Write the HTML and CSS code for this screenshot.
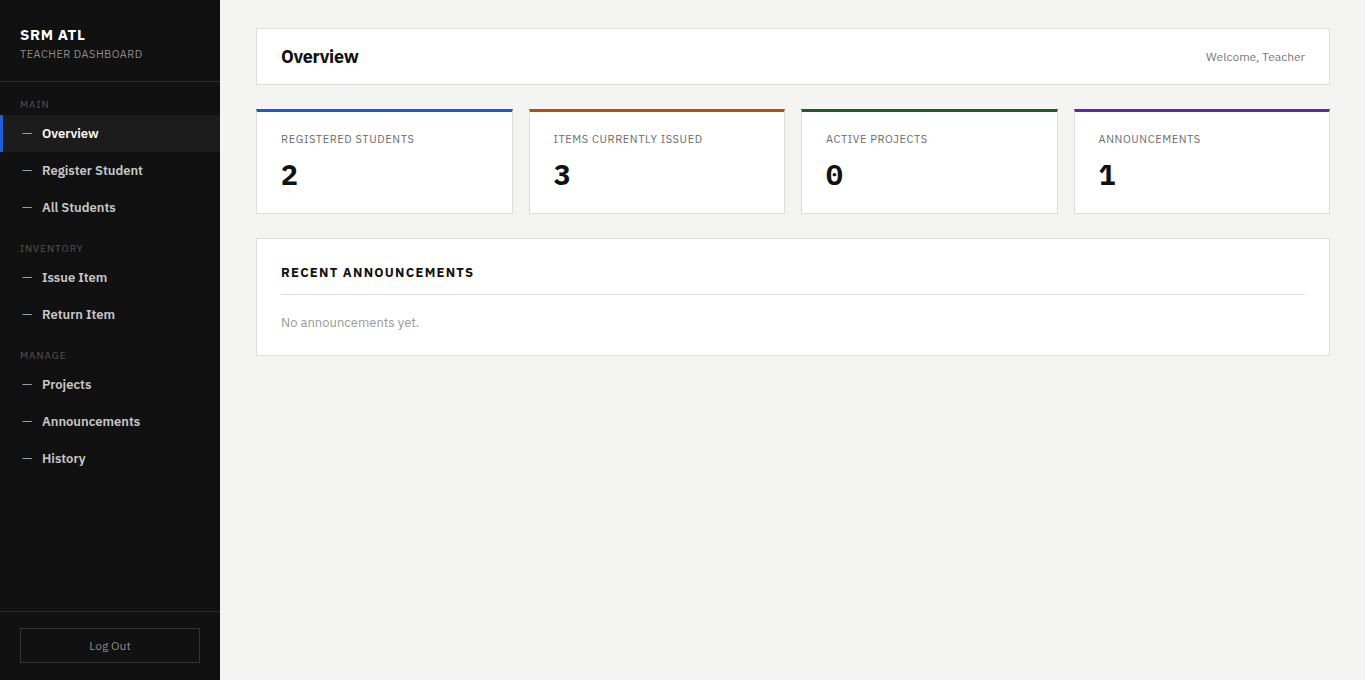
FILE: index.html
```html
<!DOCTYPE html>
<html lang="en">
<head>
<meta charset="utf-8">
<title>SRM ATL — Teacher Dashboard</title>
<link rel="stylesheet" href="styles.css">
</head>
<body>
<div class="app">
  <aside class="sidebar">
    <div class="brand">
      <div class="brand-name">SRM ATL</div>
      <div class="brand-sub">TEACHER DASHBOARD</div>
    </div>
    <nav class="nav">
      <div class="nav-section">
        <div class="nav-label">MAIN</div>
        <a class="nav-item active"><span class="dash">—</span>Overview</a>
        <a class="nav-item"><span class="dash">—</span>Register Student</a>
        <a class="nav-item"><span class="dash">—</span>All Students</a>
      </div>
      <div class="nav-section">
        <div class="nav-label">INVENTORY</div>
        <a class="nav-item"><span class="dash">—</span>Issue Item</a>
        <a class="nav-item"><span class="dash">—</span>Return Item</a>
      </div>
      <div class="nav-section">
        <div class="nav-label">MANAGE</div>
        <a class="nav-item"><span class="dash">—</span>Projects</a>
        <a class="nav-item"><span class="dash">—</span>Announcements</a>
        <a class="nav-item"><span class="dash">—</span>History</a>
      </div>
    </nav>
    <div class="sidebar-foot">
      <button class="logout">Log Out</button>
    </div>
  </aside>
  <main class="main">
    <header class="topbar">
      <h1 class="title">Overview</h1>
      <div class="welcome">Welcome, Teacher</div>
    </header>
    <section class="stats">
      <div class="stat stat-blue">
        <div class="stat-label">REGISTERED STUDENTS</div>
        <div class="stat-value">2</div>
      </div>
      <div class="stat stat-orange">
        <div class="stat-label">ITEMS CURRENTLY ISSUED</div>
        <div class="stat-value">3</div>
      </div>
      <div class="stat stat-green">
        <div class="stat-label">ACTIVE PROJECTS</div>
        <div class="stat-value">0</div>
      </div>
      <div class="stat stat-purple">
        <div class="stat-label">ANNOUNCEMENTS</div>
        <div class="stat-value">1</div>
      </div>
    </section>
    <section class="panel">
      <h2 class="panel-title">RECENT ANNOUNCEMENTS</h2>
      <p class="empty">No announcements yet.</p>
    </section>
  </main>
</div>
</body>
</html>
```

FILE: styles.css
```css
* { box-sizing: border-box; }
html, body { margin: 0; padding: 0; height: 100%; }
body {
  font-family: "IBM Plex Sans", Inter, "Noto Sans", sans-serif;
  background: #f4f4f2;
  color: #111;
}
.app { display: flex; min-height: 100vh; }

.sidebar {
  width: 220px;
  flex: 0 0 220px;
  background: #111111;
  display: flex;
  flex-direction: column;
  min-height: 100vh;
}
.brand {
  padding: 26px 20px 20px;
  border-bottom: 1px solid #2a2a2a;
  height: 82px;
}
.brand-name {
  color: #fff;
  font-size: 15px;
  font-weight: 700;
  letter-spacing: 0.6px;
  line-height: 18px;
}
.brand-sub {
  color: #8a8a8a;
  font-size: 11px;
  letter-spacing: 0.45px;
  line-height: 14px;
  margin-top: 3px;
}
.nav { flex: 1; }
.nav-section { padding-top: 17px; }
.nav-label {
  color: #555;
  font-size: 10px;
  letter-spacing: 1px;
  line-height: 12px;
  padding-left: 20px;
  margin-bottom: 4px;
}
.nav-item {
  display: flex;
  align-items: center;
  height: 37px;
  padding-left: 19px;
  color: #c8c8c8;
  font-size: 13px;
  font-weight: 600;
  text-decoration: none;
  border-left: 3px solid transparent;
}
.nav-item .dash {
  display: inline-block;
  width: 20px;
  color: #a0a0a0;
  font-weight: 400;
  font-size: 13px;
}
.nav-item.active {
  background: #1c1c1c;
  border-left-color: #1f5ed8;
  color: #fff;
}
.sidebar-foot {
  border-top: 1px solid #2a2a2a;
  padding: 16px 20px 17px;
}
.logout {
  display: block;
  width: 100%;
  height: 35px;
  background: transparent;
  border: 1px solid #333;
  color: #8a8a8a;
  font-family: inherit;
  font-size: 12px;
  cursor: pointer;
}

.main {
  flex: 1;
  padding: 28px 35px 28px 36px;
  display: flex;
  flex-direction: column;
  gap: 24px;
}
.topbar {
  background: #fff;
  border: 1px solid #dedede;
  height: 57px;
  padding: 0 24px;
  display: flex;
  align-items: center;
  justify-content: space-between;
}
.title {
  margin: 0;
  font-size: 18px;
  font-weight: 700;
  letter-spacing: -0.3px;
  color: #111;
}
.welcome {
  font-size: 12px;
  color: #777;
}
.stats {
  display: grid;
  grid-template-columns: repeat(4, 1fr);
  gap: 16px;
}
.stat {
  background: #fff;
  border: 1px solid #dedede;
  border-top: 3px solid #1f5ed8;
  height: 105px;
  padding: 20px 24px 0;
}
.stat-blue { border-top-color: #1f58d6; }
.stat-orange { border-top-color: #b4500c; }
.stat-green { border-top-color: #1a5c2a; }
.stat-purple { border-top-color: #6a24a8; }
.stat-label {
  font-size: 11px;
  letter-spacing: 0.6px;
  color: #6b6b6b;
  line-height: 14px;
}
.stat-value {
  font-family: "IBM Plex Mono", "DejaVu Sans Mono", monospace;
  font-size: 28px;
  font-weight: 700;
  line-height: 34px;
  margin-top: 12px;
  color: #111;
}
.panel {
  background: #fff;
  border: 1px solid #dedede;
  padding: 26px 24px 24px;
  height: 118px;
}
.panel-title {
  margin: 0;
  font-size: 13px;
  font-weight: 700;
  letter-spacing: 1.25px;
  line-height: 16px;
  padding-bottom: 13px;
  border-bottom: 1px solid #dedede;
  color: #111;
}
.empty {
  margin: 20px 0 0;
  font-size: 13px;
  color: #999;
  line-height: 16px;
}
```
